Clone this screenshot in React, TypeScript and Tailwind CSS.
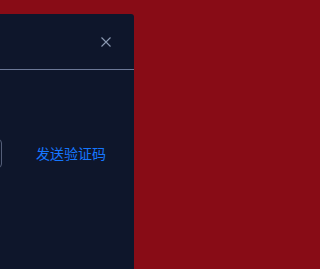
import React from "react";

export default function App() {
  return (
    <div className="w-full min-h-[269px] h-screen bg-[#880c16] overflow-hidden" style={{ fontFamily: '"Noto Sans CJK SC", "Noto Sans", sans-serif' }}>
      <div className="pt-[14px]">
        <div className="ml-[-266px] w-[400px] h-[255px] bg-[#0e162b] rounded-tr-[3px]">
          <div className="h-[56px] border-b border-[#6b7796] flex items-center justify-end pl-6 pr-[23px]">
            <svg width="10" height="10" viewBox="0 0 10 10" className="text-[#8c9ab3]">
              <path d="M0.5 0.5 L9.5 9.5 M9.5 0.5 L0.5 9.5" stroke="currentColor" strokeWidth="1.1" />
            </svg>
          </div>
          <div className="pt-[69px] pl-6 pr-[28px] flex items-center">
            <div className="flex-1 h-[29px] border border-[#545e78] rounded-[4px]" />
            <button className="ml-[34px] text-[14px] leading-[22px] text-[#1677ff] bg-transparent -mt-[2px]">发送验证码</button>
          </div>
        </div>
      </div>
    </div>
  );
}
